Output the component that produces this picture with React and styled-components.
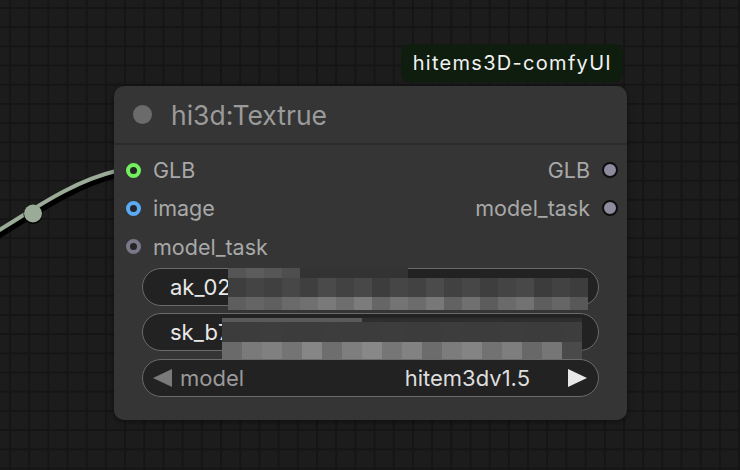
import React from "react";
import styled, { createGlobalStyle } from "styled-components";

// mosaic colours for the blurred key fields: [top, middle, bottom] per column
const akCols = [
  ["#555555", "#3e3e3e", "#5e5e5e"],
  ["#5c5c5c", "#444444", "#656565"],
  ["#565656", "#404040", "#5f5f5f"],
  ["#4e4e4e", "#474747", "#6a6a6a"],
  ["#333333", "#3f3f3f", "#707070"],
  ["#333333", "#4a4a4a", "#7a7a7a"],
  ["#333333", "#424242", "#6e6e6e"],
  ["#333333", "#484848", "#7c7c7c"],
  ["#333333", "#3d3d3d", "#666666"],
  ["#333333", "#464646", "#747474"],
  [null, "#424242", "#6c6c6c"],
  [null, "#4b4b4b", "#787878"],
  [null, "#414141", "#626262"],
  [null, "#474747", "#707070"],
  [null, "#3e3e3e", "#5c5c5c"],
  [null, "#444444", "#6a6a6a"],
  [null, "#484848", "#727272"],
  [null, "#3c3c3c", "#5e5e5e"],
  [null, "#424242", "#666666"],
  [null, "#3d3d3d", "#585858"],
];

const skCols = [
  ["#5a5a5a", "#3c3c3c", "#6a6a6a"],
  ["#5a5a5a", "#3c3c3c", "#7a7a7a"],
  ["#5a5a5a", "#3d3d3d", "#808080"],
  ["#5a5a5a", "#3c3c3c", "#747474"],
  ["#5a5a5a", "#3c3c3c", "#868686"],
  ["#5a5a5a", "#3d3d3d", "#6e6e6e"],
  ["#5a5a5a", "#3c3c3c", "#7e7e7e"],
  ["#2e2e2e", "#3c3c3c", "#888888"],
  ["#2e2e2e", "#3d3d3d", "#767676"],
  ["#2e2e2e", "#3c3c3c", "#828282"],
  ["#2e2e2e", "#3c3c3c", "#6c6c6c"],
  ["#2e2e2e", "#3d3d3d", "#7c7c7c"],
  ["#2e2e2e", "#3c3c3c", "#848484"],
  ["#2e2e2e", "#3c3c3c", "#727272"],
  ["#2e2e2e", "#3d3d3d", "#7e7e7e"],
  ["#2e2e2e", "#3c3c3c", "#686868"],
  ["#2e2e2e", "#3c3c3c", "#767676"],
  ["#2e2e2e", "#3d3d3d", "#4a4a4a"],
];

const GlobalStyle = createGlobalStyle`
  html, body {
    margin: 0;
    padding: 0;
    background: #1c1c1c;
    font-family: Inter, "Noto Sans", sans-serif;
  }
`;

const Canvas = styled.div`
  position: relative;
  width: 740px;
  height: 470px;
  overflow: hidden;
  background-color: #1c1c1c;
  background-image:
    linear-gradient(to right, #151515 2px, transparent 2px),
    linear-gradient(to bottom, #151515 2px, transparent 2px);
  background-size: 19.2px 19.2px;
  background-position: 9px 7px;
`;

const Link = styled.svg`
  position: absolute;
  left: 0;
  top: 0;
`;

const Badge = styled.div`
  position: absolute;
  right: 117px;
  top: 44px;
  height: 38px;
  padding: 0 11px 0 12px;
  display: flex;
  align-items: center;
  background: #0f1d0e;
  border-radius: 8px;
  color: #f2f2f2;
  font-size: 20px;
  letter-spacing: 1.3px;
`;

const Node = styled.div`
  position: absolute;
  left: 114px;
  top: 86px;
  width: 513px;
  background: #353535;
  border-radius: 10px;
  box-shadow: 0 2px 6px rgba(0, 0, 0, 0.45);
  padding-bottom: 23px;
`;

const TitleBar = styled.div`
  height: 57px;
  display: flex;
  align-items: center;
  gap: 19px;
  padding-left: 19px;
  border-bottom: 2px solid #2b2b2b;
`;

const TitleDot = styled.div`
  flex: 0 0 19px;
  height: 19px;
  border-radius: 50%;
  background: #6b6b6b;
`;

const Title = styled.span`
  color: #9b9b9b;
  font-size: 26.5px;
`;

const Slots = styled.div`
  padding-top: 6px;
  display: flex;
  flex-direction: column;
`;

const SlotRow = styled.div`
  height: 38.3px;
  display: flex;
  align-items: center;
  justify-content: space-between;
`;

const Side = styled.div`
  display: flex;
  align-items: center;
  gap: 12px;
  padding: ${(p) => (p.$out ? "0 9px 0 0" : "0 0 0 12px")};
`;

const InDot = styled.div`
  flex: 0 0 auto;
  box-sizing: border-box;
  width: 15px;
  height: 15px;
  border-radius: 50%;
  border: 4.5px solid ${(p) => p.$color};
  background: #262626;
`;

const OutDot = styled.div`
  flex: 0 0 auto;
  box-sizing: border-box;
  width: 16px;
  height: 16px;
  border-radius: 50%;
  border: 2px solid #0e0e0e;
  background: #8d8b9d;
`;

const Label = styled.span`
  color: #a8a8a8;
  font-size: 21.5px;
`;

const Widgets = styled.div`
  margin-top: 2px;
  padding: 0 28px;
  display: flex;
  flex-direction: column;
  gap: 7.5px;
`;

const Field = styled.div`
  position: relative;
  box-sizing: border-box;
  height: 38px;
  border: 1px solid #6a6a6a;
  border-radius: 19px;
  background: #222222;
  display: flex;
  align-items: center;
  padding: ${(p) => (p.$combo ? "0 11px 0 10px" : "0 16px 0 27px")};
  color: #e8e8e8;
  font-size: 22px;
`;

const Mosaic = styled.div`
  position: absolute;
  left: ${(p) => p.$left}px;
  top: ${(p) => p.$top}px;
  display: flex;
`;

const MosaicCol = styled.div`
  display: flex;
  flex-direction: column;
  width: ${(p) => p.$w}px;
`;

const MosaicCell = styled.div`
  height: ${(p) => p.$h}px;
  background: ${(p) => p.$c || "transparent"};
`;

const Tri = styled.svg`
  flex: 0 0 auto;
  display: block;
`;

const ComboName = styled.span`
  color: #9a9a9a;
  margin-left: 8px;
  flex: 1;
`;

const ComboValue = styled.span`
  color: #dedede;
  margin-right: 38px;
`;

function BlurBlock({ cols, left, top, w, heights }) {
  return (
    <Mosaic $left={left} $top={top}>
      {cols.map((c, i) => (
        <MosaicCol key={i} $w={w}>
          {c.map((color, j) => (
            <MosaicCell key={j} $h={heights[j]} $c={color} />
          ))}
        </MosaicCol>
      ))}
    </Mosaic>
  );
}

export default function App() {
  return (
    <>
      <GlobalStyle />
      <Canvas>
        <Link width="740" height="470">
          <path d="M -4 234 C 30 214, 70 184, 116 172" fill="none" stroke="#000" strokeWidth="8" transform="translate(0 2)" />
          <path d="M -4 232 C 30 212, 70 182, 116 171" fill="none" stroke="#9aab98" strokeWidth="4" />
          <circle cx="33" cy="213.5" r="9.5" fill="#000" transform="translate(0 1)" />
          <circle cx="33" cy="213.5" r="9" fill="#9aab98" />
        </Link>

        <Badge>hitems3D-comfyUI</Badge>

        <Node>
          <TitleBar>
            <TitleDot />
            <Title>hi3d:Textrue</Title>
          </TitleBar>

          <Slots>
            <SlotRow>
              <Side>
                <InDot $color="#72f05e" />
                <Label>GLB</Label>
              </Side>
              <Side $out>
                <Label>GLB</Label>
                <OutDot />
              </Side>
            </SlotRow>
            <SlotRow>
              <Side>
                <InDot $color="#5aaaf5" />
                <Label>image</Label>
              </Side>
              <Side $out>
                <Label>model_task</Label>
                <OutDot />
              </Side>
            </SlotRow>
            <SlotRow>
              <Side>
                <InDot $color="#7a7888" />
                <Label>model_task</Label>
              </Side>
            </SlotRow>
          </Slots>

          <Widgets>
            <Field>
              <span>ak_02</span>
              <BlurBlock cols={akCols} left={85} top={-1} w={18} heights={[10, 19, 13]} />
            </Field>
            <Field>
              <span>sk_b7</span>
              <BlurBlock cols={skCols} left={79} top={4} w={20} heights={[4, 20, 18]} />
            </Field>
            <Field $combo>
              <Tri width="19" height="18" viewBox="0 0 19 18">
                <path d="M0 9 L19 0 L19 18 Z" fill="#7a7a7a" />
              </Tri>
              <ComboName>model</ComboName>
              <ComboValue>hitem3dv1.5</ComboValue>
              <Tri width="19" height="18" viewBox="0 0 19 18">
                <path d="M0 0 L19 9 L0 18 Z" fill="#e8e8e8" />
              </Tri>
            </Field>
          </Widgets>
        </Node>
      </Canvas>
    </>
  );
}
